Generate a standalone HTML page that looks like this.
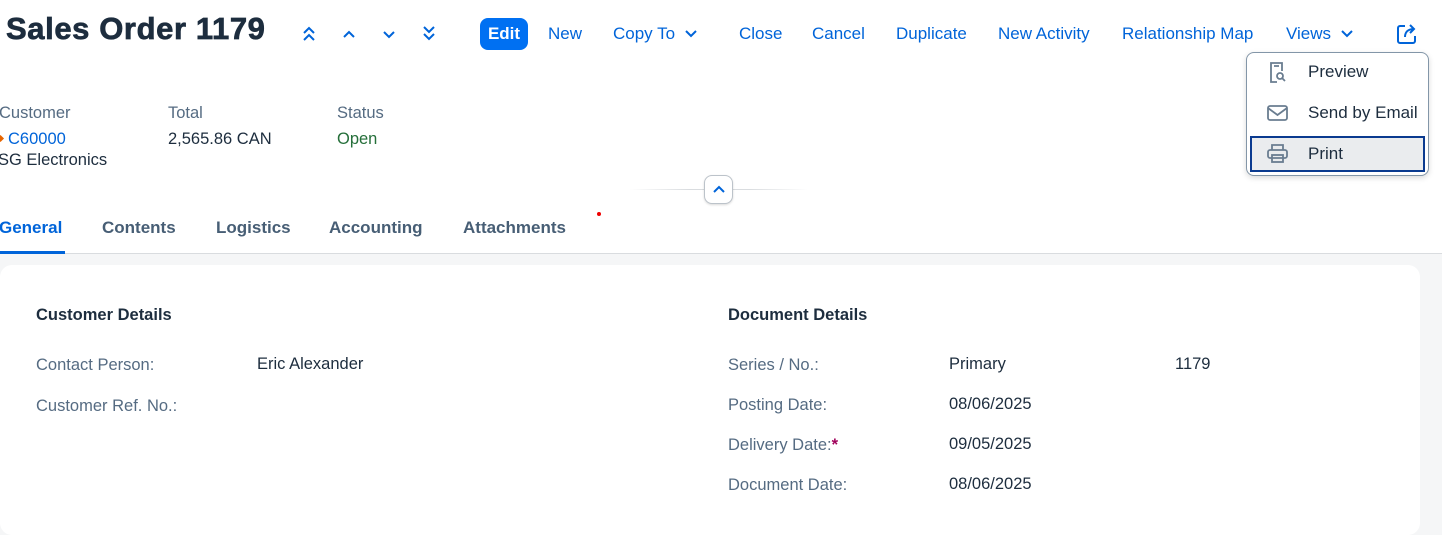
<!DOCTYPE html>
<html><head><meta charset="utf-8"><style>
*{margin:0;padding:0;box-sizing:border-box}
body{width:1442px;height:517px;overflow:hidden;background:#f5f6f7;font-family:"Liberation Sans",sans-serif;position:relative}
.a{position:absolute;white-space:nowrap}
.top{position:absolute;left:0;top:0;width:1442px;height:254px;background:#fff;border-bottom:1px solid #d9dcdf}
.tb{font-size:17px;color:#0064d9;top:24px}
.lbl{color:#556b82;font-size:16.5px}
.val{color:#1d2d3e;font-size:16.5px}
.tab{font-size:17px;font-weight:bold;color:#475e75;top:218px}
</style></head><body>
<div class="top"></div>
<div class="a" style="left:6px;top:11px;font-size:31px;font-weight:bold;color:#1d2d3e;letter-spacing:0.6px;-webkit-text-stroke:0.7px #1d2d3e">Sales Order 1179</div>
<svg class="a" style="left:300px;top:24px" width="145" height="20" fill="none" stroke="#0064d9" stroke-width="2">
<path d="M4 9l5-5 5 5M4 16l5-5 5 5"/><path d="M44 13l5-5 5 5"/><path d="M84 8l5 5 5-5"/><path d="M124 3l5 5 5-5M124 10l5 5 5-5"/></svg>
<div class="a" style="left:480px;top:18px;width:48px;height:32px;background:#0070f2;border-radius:8px;color:#fff;font-size:17px;font-weight:bold;text-align:center;line-height:32px">Edit</div>
<div class="a tb" style="left:548px">New</div>
<div class="a tb" style="left:613px">Copy To</div>
<svg class="a" style="left:684px;top:29px" width="14" height="10" fill="none" stroke="#0064d9" stroke-width="2"><path d="M2 2l5 5 5-5"/></svg>
<div class="a tb" style="left:739px">Close</div>
<div class="a tb" style="left:812px">Cancel</div>
<div class="a tb" style="left:896px">Duplicate</div>
<div class="a tb" style="left:998px">New Activity</div>
<div class="a tb" style="left:1122px">Relationship Map</div>
<div class="a tb" style="left:1286px">Views</div>
<svg class="a" style="left:1340px;top:29px" width="14" height="10" fill="none" stroke="#0064d9" stroke-width="2"><path d="M2 2l5 5 5-5"/></svg>
<svg class="a" style="left:1396px;top:23px" width="22" height="22" fill="none" stroke="#0064d9" stroke-width="2"><path d="M9 3H4a2 2 0 0 0-2 2v13a2 2 0 0 0 2 2h13a2 2 0 0 0 2-2v-5"/><path d="M9 14c0-5 3-8 9-8M14 2l4 4-4 4"/></svg>

<div class="a" style="left:1246px;top:52px;width:183px;height:124px;background:#fff;border:1px solid #8396a8;border-radius:8px;box-shadow:0 2px 6px rgba(0,0,0,.15)"></div>
<div class="a" style="left:1250px;top:136px;width:175px;height:36px;background:#eaecee;border:2px solid #0a3a8f"></div>
<svg class="a" style="left:1266px;top:61px" width="24" height="104" fill="none" stroke="#6a7d90" stroke-width="1.8">
<path d="M11 21H5V2h11v8M8 5h5"/><circle cx="14" cy="15" r="3"/><path d="M16 17l3 3"/>
<rect x="2" y="45" width="19" height="14" rx="2"/><path d="M2 47l9.5 7 9.5-7"/>
<path d="M6 89v-5h11v5"/><rect x="2" y="89" width="19" height="8" rx="2"/><rect x="6" y="94" width="11" height="7"/></svg>
<div class="a val" style="left:1308px;top:62px;font-size:17px">Preview</div>
<div class="a val" style="left:1308px;top:103px;font-size:17px">Send by Email</div>
<div class="a val" style="left:1308px;top:144px;font-size:17px">Print</div>

<div class="a lbl" style="left:-1px;top:104px">Customer</div>
<div class="a" style="left:-2px;top:136px;width:5px;height:5px;background:#e76500;transform:rotate(45deg)"></div>
<div class="a" style="left:8px;top:130px;font-size:16.5px;color:#0064d9">C60000</div>
<div class="a val" style="left:-2px;top:151px">SG Electronics</div>
<div class="a lbl" style="left:168px;top:104px">Total</div>
<div class="a val" style="left:168px;top:130px">2,565.86 CAN</div>
<div class="a lbl" style="left:337px;top:104px">Status</div>
<div class="a" style="left:337px;top:130px;font-size:16.5px;color:#256f3a">Open</div>

<div class="a" style="left:630px;top:189px;width:178px;height:1px;background:linear-gradient(90deg,#fff,#d9dcdf,#d9dcdf,#fff)"></div>
<div class="a" style="left:704px;top:175px;width:29px;height:29px;background:#fff;border:1px solid #bcc3ca;border-radius:8px;box-shadow:0 1px 2px rgba(0,0,0,.15)"></div>
<svg class="a" style="left:712px;top:183px" width="14" height="12" fill="none" stroke="#0064d9" stroke-width="2"><path d="M2 9l5-5 5 5"/></svg>

<div class="a tab" style="left:-1px;color:#0064d9">General</div>
<div class="a" style="left:0;top:251px;width:65px;height:3px;background:#0064d9"></div>
<div class="a tab" style="left:102px">Contents</div>
<div class="a tab" style="left:216px">Logistics</div>
<div class="a tab" style="left:329px">Accounting</div>
<div class="a tab" style="left:463px">Attachments</div>
<div class="a" style="left:597px;top:212px;width:4px;height:4px;border-radius:50%;background:#e00"></div>

<div class="a" style="left:0;top:265px;width:1420px;height:270px;background:#fff;border-radius:12px"></div>
<div class="a val" style="left:36px;top:306px;font-weight:bold">Customer Details</div>
<div class="a lbl" style="left:36px;top:356px">Contact Person:</div>
<div class="a val" style="left:257px;top:355px">Eric Alexander</div>
<div class="a lbl" style="left:36px;top:397px">Customer Ref. No.:</div>
<div class="a val" style="left:728px;top:306px;font-weight:bold">Document Details</div>
<div class="a lbl" style="left:728px;top:356px">Series / No.:</div>
<div class="a val" style="left:949px;top:355px">Primary</div>
<div class="a val" style="left:1175px;top:355px">1179</div>
<div class="a lbl" style="left:728px;top:396px">Posting Date:</div>
<div class="a val" style="left:949px;top:395px">08/06/2025</div>
<div class="a lbl" style="left:728px;top:436px">Delivery Date:<span style="color:#a0005a;font-weight:bold">*</span></div>
<div class="a val" style="left:949px;top:435px">09/05/2025</div>
<div class="a lbl" style="left:728px;top:476px">Document Date:</div>
<div class="a val" style="left:949px;top:475px">08/06/2025</div>
</body></html>
